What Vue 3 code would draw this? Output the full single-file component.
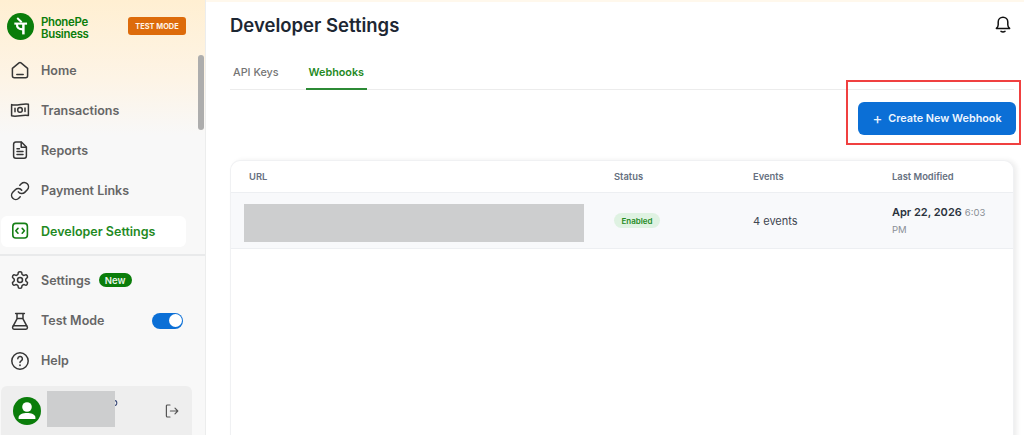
<script setup>
const topNav = [
  { label: 'Home', icon: 'home' },
  { label: 'Transactions', icon: 'money' },
  { label: 'Reports', icon: 'doc' },
  { label: 'Payment Links', icon: 'link' },
  { label: 'Developer Settings', icon: 'code', active: true },
]
</script>

<template>
  <div class="page">
    <aside class="sidebar">
      <div class="brand">
        <svg class="logo" viewBox="0 0 28 28" width="27" height="27">
          <circle cx="14" cy="14" r="14" fill="#0a7d0a" />
          <path d="M7.6 11h13.2" fill="none" stroke="#fff" stroke-width="2.2" />
          <path d="M17 11v11.2" fill="none" stroke="#fff" stroke-width="2.6" />
          <path d="M10.4 11c-.4 4 1.6 6.2 6.6 6" fill="none" stroke="#fff" stroke-width="2.3" />
          <path d="M10.6 5.2l4.6 4.4" fill="none" stroke="#fff" stroke-width="2" />
        </svg>
        <div class="wordmark"><span>PhonePe</span><span>Business</span></div>
        <span class="test-chip">TEST MODE</span>
      </div>

      <nav class="nav">
        <a v-for="item in topNav" :key="item.label" class="nav-item" :class="{ active: item.active }">
          <svg class="ico" viewBox="0 0 20 20" width="20" height="20" fill="none" stroke="currentColor" stroke-width="1.5" stroke-linecap="round" stroke-linejoin="round">
            <template v-if="item.icon === 'home'">
              <path d="M2.4 8.4 9 2.9a1.6 1.6 0 0 1 2 0l6.6 5.5v7.4a2 2 0 0 1-2 2H4.4a2 2 0 0 1-2-2z" />
              <path d="M6.8 14.6h6.4" />
            </template>
            <template v-else-if="item.icon === 'money'">
              <path d="M1.6 4.6c5.4 1.8 11.4-1.6 16.8-.4v11.4c-5.4-1.4-11.4 1.8-16.8.2z" />
              <circle cx="10" cy="9.9" r="2.3" />
              <path d="M5 8.2v3.6M15 8v3.6" />
            </template>
            <template v-else-if="item.icon === 'doc'">
              <path d="M3.6 4.2a2.2 2.2 0 0 1 2.2-2.2h5.6l5 5v9a2.2 2.2 0 0 1-2.2 2.2H5.8A2.2 2.2 0 0 1 3.6 16z" />
              <path d="M11.2 2.2V7.2H16.2M7 8.8h2.4M7 11.6h6M7 14.4h6" />
            </template>
            <template v-else-if="item.icon === 'link'">
              <g transform="scale(.85) translate(-.2 -.2)" stroke-width="1.8">
                <path d="M10 13a5 5 0 0 0 7.54.54l3-3a5 5 0 0 0-7.07-7.07l-1.72 1.71" />
                <path d="M14 11a5 5 0 0 0-7.54-.54l-3 3a5 5 0 0 0 7.07 7.07l1.71-1.71" />
              </g>
            </template>
            <template v-else>
              <rect x="2.8" y="2.4" width="14.6" height="14.6" rx="3" stroke-width="1.6" />
              <path d="M8 7.4 5.8 9.8 8 12.2M12.2 7.4l2.2 2.4-2.2 2.4" stroke-width="1.6" />
            </template>
          </svg>
          <span>{{ item.label }}</span>
        </a>
      </nav>

      <div class="divider"></div>

      <nav class="nav lower">
        <a class="nav-item">
          <svg class="ico" viewBox="0 0 24 24" width="20" height="20" fill="none" stroke="currentColor" stroke-width="1.8" stroke-linecap="round" stroke-linejoin="round">
            <path d="M12.22 2h-.44a2 2 0 0 0-2 2v.18a2 2 0 0 1-1 1.73l-.43.25a2 2 0 0 1-2 0l-.15-.08a2 2 0 0 0-2.73.73l-.22.38a2 2 0 0 0 .73 2.73l.15.1a2 2 0 0 1 1 1.72v.51a2 2 0 0 1-1 1.74l-.15.09a2 2 0 0 0-.73 2.73l.22.38a2 2 0 0 0 2.73.73l.15-.08a2 2 0 0 1 2 0l.43.25a2 2 0 0 1 1 1.73V20a2 2 0 0 0 2 2h.44a2 2 0 0 0 2-2v-.18a2 2 0 0 1 1-1.73l.43-.25a2 2 0 0 1 2 0l.15.08a2 2 0 0 0 2.73-.73l.22-.39a2 2 0 0 0-.73-2.73l-.15-.08a2 2 0 0 1-1-1.74v-.5a2 2 0 0 1 1-1.74l.15-.09a2 2 0 0 0 .73-2.73l-.22-.38a2 2 0 0 0-2.73-.73l-.15.08a2 2 0 0 1-2 0l-.43-.25a2 2 0 0 1-1-1.73V4a2 2 0 0 0-2-2z" />
            <circle cx="12" cy="12" r="3" />
          </svg>
          <span>Settings</span>
          <span class="new-chip">New</span>
        </a>
        <a class="nav-item">
          <svg class="ico" viewBox="0 0 20 20" width="20" height="20" fill="none" stroke="currentColor" stroke-width="1.5" stroke-linecap="round" stroke-linejoin="round">
            <path d="M5.6 2.4h8.8M7 2.4v5.4L3.4 14.6M13 2.4v5.4l3.6 6.8M7 7.4h6" />
            <rect x="2.6" y="14.8" width="14.8" height="3.4" rx="1.4" />
          </svg>
          <span>Test Mode</span>
          <span class="toggle"><i></i></span>
        </a>
        <a class="nav-item">
          <svg class="ico" viewBox="0 0 20 20" width="20" height="20" fill="none" stroke="currentColor" stroke-width="1.5" stroke-linecap="round" stroke-linejoin="round">
            <circle cx="10" cy="10" r="8.2" />
            <path d="M7.8 7.8a2.3 2.3 0 1 1 3.4 2c-.8.5-1.2 1-1.2 1.8" />
            <path d="M10 14.2v.1" stroke-width="1.8" />
          </svg>
          <span>Help</span>
        </a>
      </nav>

      <div class="user">
        <svg class="avatar" viewBox="0 0 28 28" width="28" height="28">
          <circle cx="14" cy="14" r="14" fill="#0a7d0a" />
          <circle cx="14" cy="10" r="4.8" fill="#fff" />
          <path d="M5.6 20.4c0-3 4.4-4.4 8.4-4.4s8.4 1.4 8.4 4.4v1.6H5.6z" fill="#fff" />
        </svg>
        <div class="redact-small"></div>
        <svg class="peek" viewBox="0 0 3 6" width="3" height="6" fill="none" stroke="#3a4a78" stroke-width="1.1"><path d="M0 .6c2.4 0 2.4 4.8 0 4.8" /></svg>
        <svg class="logout" viewBox="0 0 16 16" width="16" height="16" fill="none" stroke="#555" stroke-width="1.2" stroke-linecap="round" stroke-linejoin="round">
          <path d="M6 2H3.4a1 1 0 0 0-1 1v10a1 1 0 0 0 1 1H6M6.4 8h7.4M11 5.2 13.8 8 11 10.8" />
        </svg>
      </div>

      <div class="thumb"></div>
    </aside>

    <main class="main">
      <header class="head">
        <h1>Developer Settings</h1>
        <svg class="bell" viewBox="0 0 20 20" width="20" height="20" fill="none" stroke="#111" stroke-width="1.5" stroke-linecap="round" stroke-linejoin="round">
          <path d="M3.4 14.4c1.2-1 1.8-2 1.8-3.6V8a4.8 4.8 0 0 1 9.6 0v2.8c0 1.6.6 2.6 1.8 3.6z" />
          <path d="M8 17.4c1.2.7 2.8.7 4 0" />
        </svg>
      </header>

      <div class="tabs">
        <span class="tab">API Keys</span>
        <span class="tab on">Webhooks</span>
      </div>

      <div class="actions">
        <button class="create"><span class="plus">+</span>Create New Webhook</button>
      </div>

      <section class="table">
        <div class="row thead">
          <span>URL</span>
          <span>Status</span>
          <span>Events</span>
          <span>Last Modified</span>
        </div>
        <div class="row tbody">
          <span class="c-url"><span class="redact-url"></span></span>
          <span class="c-status"><span class="pill">Enabled</span></span>
          <span class="events">4 events</span>
          <span class="date"><b>Apr 22, 2026</b> <small>6:03 PM</small></span>
        </div>
      </section>

      <div class="annotation"></div>
    </main>
  </div>
</template>

<style>
html, body { margin: 0; background: #fff; overflow: hidden; }
</style>

<style scoped>
* { box-sizing: border-box; }
.page {
  display: flex;
  width: 1024px;
  height: 435px;
  overflow: hidden;
  font-family: Inter, "Liberation Sans", sans-serif;
  position: relative;
}
.sidebar {
  position: relative;
  width: 206px;
  flex: none;
  height: 435px;
  background: linear-gradient(180deg, #ffefd2 0%, #fdf4e6 80px, #f8f8f8 135px);
  border-right: 1px solid #eceded;
  overflow: hidden;
}
.brand {
  display: flex;
  align-items: center;
  height: 34px;
  margin-top: 9px;
  padding: 0 19px 0 7px;
}
.logo { flex: none; }
.wordmark {
  display: flex;
  flex-direction: column;
  margin: 3px 0 0 7px;
  color: #0a7d0a;
  font-size: 11.4px;
  font-weight: 600;
  line-height: 12px;
  letter-spacing: -0.3px;
}
.test-chip {
  margin-left: auto;
  width: 58px;
  height: 18px;
  border-radius: 3px;
  background: #dd6b0b;
  color: #fff3e6;
  font-size: 7.4px;
  font-weight: 700;
  display: flex;
  align-items: center;
  justify-content: center;
}
.nav { display: flex; flex-direction: column; padding-top: 7px; }
.nav.lower { padding-top: 4.6px; }
.nav-item {
  display: flex;
  align-items: center;
  height: 40.2px;
  width: 185px;
  margin-left: 1px;
  padding-left: 9px;
  color: #666;
  font-size: 12.5px;
  font-weight: 600;
  border-radius: 6px;
}
.nav-item .ico { flex: none; margin-right: 11px; color: #363636; }
.nav-item.active {
  height: 31px;
  margin-top: 5px;
  background: #fff;
  color: #1f8a1f;
}
.nav-item.active .ico { color: #157f15; }
.divider { height: 2px; background: #e9eaeb; margin-top: 7px; width: 205px; }
.new-chip {
  margin-left: 8px;
  height: 14px;
  width: 33px;
  border-radius: 8px;
  background: #0a7d0a;
  color: #e8f5e8;
  font-size: 9.5px;
  display: flex;
  align-items: center;
  justify-content: center;
}
.toggle {
  margin-left: auto;
  margin-right: 3px;
  width: 31px;
  height: 16px;
  border-radius: 8px;
  background: #0b6fd6;
  position: relative;
}
.toggle i {
  position: absolute;
  right: 1px;
  top: 1.5px;
  width: 13px;
  height: 13px;
  border-radius: 50%;
  background: #fff;
}
.user {
  margin: 5.4px 0 0 1px;
  width: 191px;
  height: 60px;
  border-radius: 6px;
  background: #eeeeee;
  display: flex;
  align-items: flex-start;
  padding: 11px 0 0 12px;
  position: relative;
}
.redact-small {
  width: 68px;
  height: 36px;
  margin: -6px 0 0 6px;
  background: #cdcecf;
}
.peek { margin-top: 3px; }
.logout { margin: 6px 12px 0 auto; }
.thumb {
  position: absolute;
  left: 198px;
  top: 55px;
  width: 6px;
  height: 75px;
  border-radius: 3px;
  background: #adadad;
}
.main {
  flex: 1;
  min-width: 0;
  padding: 0 10px 0 24px;
  position: relative;
  border-top: 2px solid #fff8ec;
}
.head {
  display: flex;
  align-items: center;
  justify-content: space-between;
  height: 46px;
}
.head h1 {
  margin: 0;
  font-size: 18.5px;
  font-weight: 600;
  color: #1d2733;
}
.bell { margin-right: 1px; margin-top: -2px; }
.tabs {
  display: flex;
  margin-top: 8px;
  height: 34px;
  border-bottom: 1px solid #ececec;
}
.tab {
  padding: 10px 4px 0 3px;
  margin-right: 23px;
  font-size: 10.8px;
  font-weight: 500;
  color: #757575;
  height: 34px;
}
.tab.on {
  color: #1f8a1f;
  font-weight: 600;
  border-bottom: 2px solid #2c8a35;
  padding: 10px 3px 0 3px;
}
.actions { display: flex; justify-content: flex-end; margin-top: 12px; }
.create {
  width: 158px;
  height: 33px;
  margin-right: -2px;
  border: 0;
  border-radius: 6px;
  background: #0b6fd6;
  color: #eef6ff;
  font: 600 10.8px Inter, "Liberation Sans", sans-serif;
  display: flex;
  align-items: center;
  justify-content: center;
  gap: 6px;
}
.plus { font-size: 15px; font-weight: 400; line-height: 1; }
.table {
  margin-top: 25px;
  width: 784px;
  height: 300px;
  border: 1px solid #f0f1f3;
  border-bottom: 0;
  border-radius: 10px 10px 0 0;
  box-shadow: 3px 0 5px rgba(0, 0, 0, .07);
  background: #fff;
}
.row { display: grid; grid-template-columns: 365px 139px 139px 1fr; align-items: center; }
.thead {
  height: 32px;
  font-size: 9.4px;
  font-weight: 600;
  color: #667080;
  border-bottom: 1px solid #edeff2;
}
.thead span { padding-left: 18px; }
.tbody {
  height: 56px;
  background: #f8f9fb;
  border-bottom: 1px solid #edeff2;
}
.tbody > span { padding-left: 18px; }
.tbody .c-url { padding-left: 13px; display: flex; margin-top: 4px; }
.tbody .c-status { display: flex; }
.redact-url { width: 340px; height: 38px; background: #cdcecf; }
.pill {
  display: flex;
  align-items: center;
  justify-content: center;
  width: 46px;
  height: 15px;
  border-radius: 8px;
  background: #dff2e2;
  color: #1f8a1f;
  font-size: 8px;
  font-weight: 600;
}
.events { font-size: 11px; color: #3f4651; }
.date { font-size: 11px; line-height: 17px; color: #2a323d; padding-right: 20px; }
.date b { font-weight: 600; }
.date small { font-size: 9.5px; font-weight: 400; color: #8a8f96; }
.annotation {
  position: absolute;
  left: 640px;
  top: 78px;
  width: 175px;
  height: 65px;
  border: 2px solid #f04040;
  pointer-events: none;
}
</style>
